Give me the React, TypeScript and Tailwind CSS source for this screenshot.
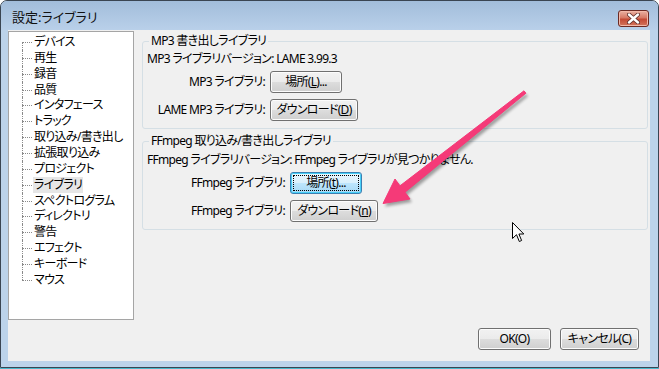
import type { ReactNode } from "react";

const treeItems = [
  "デバイス",
  "再生",
  "録音",
  "品質",
  "インタフェース",
  "トラック",
  "取り込み/書き出し",
  "拡張取り込み",
  "プロジェクト",
  "ライブラリ",
  "スペクトログラム",
  "ディレクトリ",
  "警告",
  "エフェクト",
  "キーボード",
  "マウス",
];

function Btn({
  children,
  w,
  focused,
}: {
  children: ReactNode;
  w: string;
  focused?: boolean;
}) {
  if (focused) {
    return (
      <div
        className={`${w} h-[22px] rounded-[3px] border border-[#3c7fb1] bg-[linear-gradient(#eaf6fd,#d9f0fc_50%,#bee6fd_50%,#a7d9f5)] p-[2px] shadow-[inset_0_0_0_1px_#48d0f8]`}
      >
        <div className="flex h-full items-center justify-center border border-dotted border-black leading-none">
          {children}
        </div>
      </div>
    );
  }
  return (
    <div
      className={`${w} flex h-[22px] items-center justify-center rounded-[3px] border border-[#707070] bg-[linear-gradient(#f2f2f2,#ebebeb_50%,#dddddd_50%,#cfcfcf)] leading-none shadow-[inset_0_0_0_1px_#fcfcfc]`}
    >
      {children}
    </div>
  );
}

function Row({ label, labelW, children }: { label: string; labelW: string; children: ReactNode }) {
  return (
    <div className="flex items-center">
      <div className={`${labelW} text-right`}>{label}</div>
      <div className="ml-[5px]">{children}</div>
    </div>
  );
}

function Tree() {
  return (
    <div className="mt-px h-[289px] w-[126px] border border-[#a5a5a5] bg-white pl-[13px] pt-[2px]">
      {treeItems.map((t, i) => {
        const first = i === 0;
        const last = i === treeItems.length - 1;
        return (
          <div key={t} className="flex h-[15.87px]">
            <div className="flex w-[10px] flex-col">
              <div className={`h-[8px] ${first ? "" : "border-l border-dotted border-[#8a8a8a]"}`} />
              <div
                className={`flex-1 border-t border-dotted border-[#8a8a8a] ${last ? "" : "border-l"}`}
              />
            </div>
            <span
              className={`ml-px px-px leading-[15px] ${t === "ライブラリ" ? "bg-[#e6e6e6]" : ""}`}
            >
              {t}
            </span>
          </div>
        );
      })}
    </div>
  );
}

function PinkArrow() {
  const pts = "524,90.8 400,185.8 395,179 383,203.5 410,199 405,192.2 525.9,93.2";
  return (
    <svg className="pointer-events-none absolute inset-0" width="659" height="369">
      <defs>
        <filter id="sh" x="-20%" y="-20%" width="140%" height="140%">
          <feGaussianBlur stdDeviation="1.5" />
        </filter>
      </defs>
      <polygon points={pts} fill="#000" opacity="0.35" transform="translate(2,3)" filter="url(#sh)" />
      <polygon points={pts} fill="#f53a78" stroke="#f53a78" strokeWidth="1" strokeLinejoin="round" />
    </svg>
  );
}

function Cursor() {
  return (
    <svg className="pointer-events-none absolute left-[512px] top-[222px]" width="14" height="22" viewBox="0 0 14 22">
      <path
        d="M0.5 0.5 L0.5 16.5 L4.5 12.7 L7.3 19.5 L9.6 18.5 L6.9 12 L11.8 12 Z"
        fill="#fff"
        stroke="#000"
        strokeWidth="1"
        strokeLinejoin="round"
      />
    </svg>
  );
}

export default function App() {
  return (
    <div className="relative h-[369px] w-[659px] bg-white font-['Noto_Sans','Noto_Sans_CJK_JP',sans-serif] text-[12px] tracking-[-0.7px] text-black [font-feature-settings:'palt']">
      <div className="flex h-[368px] flex-col rounded-t-[7px] border border-[#3a4552] bg-[#bcd3ea]">
        {/* title bar */}
        <div className="flex h-[29px] rounded-t-[6px] bg-[linear-gradient(#a2bddb,#b9d0e9)]">
          <div className="ml-[11px] mt-[8px] text-[13px] leading-[16px] tracking-normal text-[#111]">設定:ライブラリ</div>
          <div className="ml-auto mr-[9px] mt-[9px] flex h-[17px] w-[31px] items-center justify-center rounded-[3px] border border-[#6b2a23] bg-[linear-gradient(#eab1a2,#d77a66_45%,#c44a35_55%,#d2755c)] shadow-[inset_0_0_0_1px_#f2b8a8]">
            <svg width="13" height="11" viewBox="0 0 13 11">
              <path d="M2 1.5 L11 9.5 M11 1.5 L2 9.5" stroke="#5a2a26" strokeWidth="4" strokeLinecap="round" />
              <path d="M2 1.5 L11 9.5 M11 1.5 L2 9.5" stroke="#fff" strokeWidth="2.4" strokeLinecap="round" />
            </svg>
          </div>
        </div>

        {/* client */}
        <div className="ml-[7px] mr-[7px] flex h-[331px] w-[642px] flex-col bg-[#f0f0f0]">
          <div className="flex h-[290px]">
            <Tree />
            <div className="ml-[8px] mr-[2px] flex flex-1 flex-col">
              <div className="mt-[11px] h-[88px] rounded-[3px] border border-[#d5dfe5] pl-[4px]">
                <div className="-mt-[9px] flex h-[16px] leading-[16px]">
                  <span className="ml-[2px] bg-[#f0f0f0] px-[2px]">MP3 書き出しライブラリ</span>
                </div>
                <div className="mt-[2px] leading-[16px]">MP3 ライブラリバージョン: LAME 3.99.3</div>
                <div className="mt-[4px]">
                  <Row label="MP3 ライブラリ:" labelW="w-[118px]">
                    <Btn w="w-[72px]">
                      場所(<span className="underline">L</span>)...
                    </Btn>
                  </Row>
                </div>
                <div className="mt-[6px]">
                  <Row label="LAME MP3 ライブラリ:" labelW="w-[118px]">
                    <Btn w="w-[88px]">
                      ダウンロード(<span className="underline">D</span>)
                    </Btn>
                  </Row>
                </div>
              </div>

              <div className="mt-[12px] h-[89px] rounded-[3px] border border-[#d5dfe5] pl-[4px]">
                <div className="-mt-[9px] flex h-[16px] leading-[16px]">
                  <span className="ml-[2px] bg-[#f0f0f0] px-[2px]">FFmpeg 取り込み/書き出しライブラリ</span>
                </div>
                <div className="mt-[3px] leading-[16px]">
                  FFmpeg ライブラリバージョン: FFmpeg ライブラリが見つかりません.
                </div>
                <div className="mt-[4px]">
                  <Row label="FFmpeg ライブラリ:" labelW="w-[138px]">
                    <Btn w="w-[72px]" focused>
                      場所(<span className="underline">t</span>)...
                    </Btn>
                  </Row>
                </div>
                <div className="mt-[6px]">
                  <Row label="FFmpeg ライブラリ:" labelW="w-[138px]">
                    <Btn w="w-[88px]">
                      ダウンロード(<span className="underline">n</span>)
                    </Btn>
                  </Row>
                </div>
              </div>
            </div>
          </div>

          <div className="mt-[8px] flex justify-end gap-[9px] pr-[11px]">
            <Btn w="w-[73px]">OK(O)</Btn>
            <Btn w="w-[79px]">キャンセル(C)</Btn>
          </div>
        </div>
      </div>
      <div className="h-px bg-[#49b9cc]" />

      <PinkArrow />
      <Cursor />
    </div>
  );
}
